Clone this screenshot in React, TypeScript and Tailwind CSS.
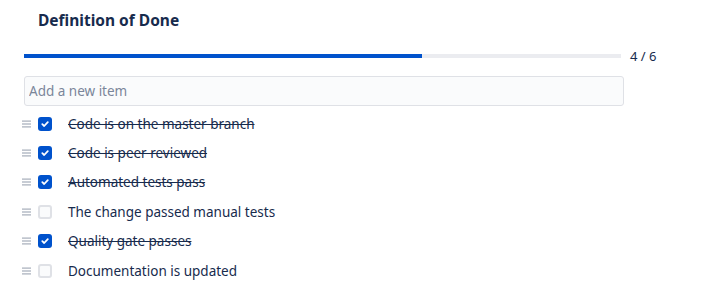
import React, { useState } from 'react';

type Item = { label: string; done: boolean };

const initialItems: Item[] = [
  { label: 'Code is on the master branch', done: true },
  { label: 'Code is peer reviewed', done: true },
  { label: 'Automated tests pass', done: true },
  { label: 'The change passed manual tests', done: false },
  { label: 'Quality gate passes', done: true },
  { label: 'Documentation is updated', done: false },
];

const DragHandle = () => (
  <svg width="9" height="8" viewBox="0 0 9 8" className="shrink-0">
    <rect x="0" y="0.5" width="9" height="1.2" fill="#a5adba" />
    <rect x="0" y="3.4" width="9" height="1.2" fill="#a5adba" />
    <rect x="0" y="6.3" width="9" height="1.2" fill="#a5adba" />
  </svg>
);

const Checkbox: React.FC<{ checked: boolean; onChange: () => void }> = ({ checked, onChange }) => (
  <button
    type="button"
    onClick={onChange}
    className={
      checked
        ? 'flex h-[14px] w-[14px] items-center justify-center rounded-[3px] bg-[#0052cc]'
        : 'h-[14px] w-[14px] rounded-[3px] border-2 border-[#dfe1e6] bg-[#fafbfc]'
    }
  >
    {checked && (
      <svg width="10" height="10" viewBox="0 0 10 10">
        <path d="M2.3 5.2 L4.2 7 L7.8 3.2" stroke="#fff" strokeWidth="1.8" fill="none" strokeLinecap="round" strokeLinejoin="round" />
      </svg>
    )}
  </button>
);

export default function App() {
  const [items, setItems] = useState(initialItems);
  const doneCount = items.filter((i) => i.done).length;
  const pct = (doneCount / items.length) * 100;

  const toggle = (index: number) =>
    setItems((prev) => prev.map((it, i) => (i === index ? { ...it, done: !it.done } : it)));

  return (
    <div className="w-[716px] h-[308px] bg-white pl-6 pt-[9px] font-['Noto_Sans',sans-serif] text-[#172b4d]">
      <h2 className="pl-[14px] text-[15.5px] font-bold leading-[22px]">Definition of Done</h2>

      <div className="mt-[15px] flex items-center">
        <div className="h-1 w-[597px] bg-[#ebecf0]">
          <div className="h-1 bg-[#0052cc]" style={{ width: `${pct}%` }} />
        </div>
        <span className="ml-[9px] text-[13px] leading-5">
          {doneCount} / {items.length}
        </span>
      </div>

      <input
        placeholder="Add a new item"
        className="mt-[10px] block h-[30px] w-[600px] rounded-[3px] border border-[#dfe1e6] bg-[#fafbfc] px-1 text-[13.5px] outline-none placeholder:text-[#7a869a]"
      />

      <ul className="mt-[3px]">
        {items.map((item, index) => (
          <li key={item.label} className="flex h-[29.4px] items-center">
            <span className="-ml-[2px] w-[16px]">
              <DragHandle />
            </span>
            <Checkbox checked={item.done} onChange={() => toggle(index)} />
            <span className={item.done ? 'ml-4 text-[13.5px] line-through' : 'ml-4 text-[13.5px]'}>
              {item.label}
            </span>
          </li>
        ))}
      </ul>
    </div>
  );
}
